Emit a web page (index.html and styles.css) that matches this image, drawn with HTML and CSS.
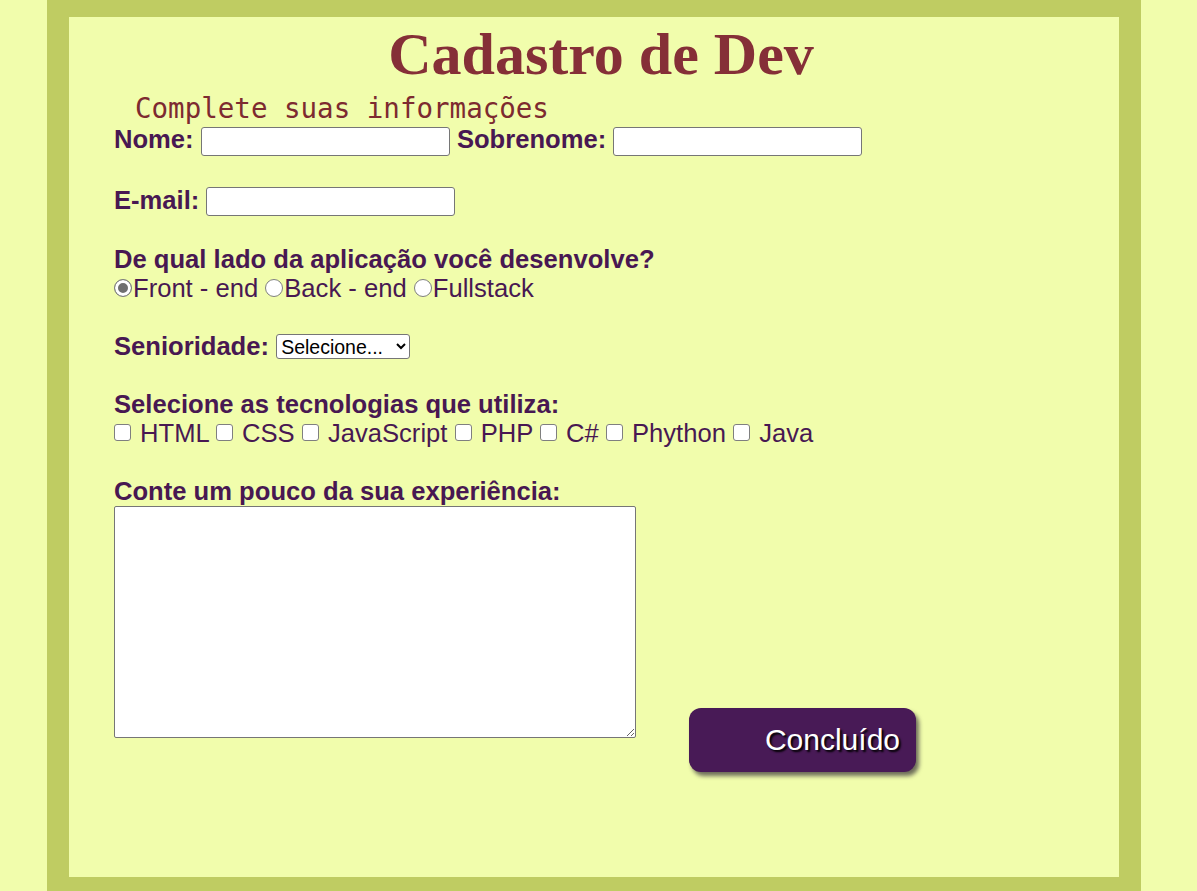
FILE: index.html
```html
<!DOCTYPE html>
<html lang="pt-BR">
<head>
<meta charset="utf-8">
<title>Cadastro de Dev</title>
<link rel="stylesheet" href="styles.css">
</head>
<body>
<main class="page">
  <h1 class="title">Cadastro de Dev</h1>
  <p class="subtitle">Complete suas informações</p>
  <form class="form">
    <div class="row row-names">
      <label class="lbl" for="nome">Nome:</label> <input class="text" id="nome" type="text"> <label class="lbl" for="sobrenome">Sobrenome:</label> <input class="text" id="sobrenome" type="text">
    </div>
    <div class="row row-email">
      <label class="lbl" for="email">E-mail:</label> <input class="text" id="email" type="email">
    </div>
    <div class="row row-side">
      <div class="lbl">De qual lado da aplicação você desenvolve?</div>
      <div class="line"><input class="radio" type="radio" name="lado" checked>Front - end <input class="radio" type="radio" name="lado">Back - end <input class="radio" type="radio" name="lado">Fullstack</div>
    </div>
    <div class="row row-senior">
      <label class="lbl" for="senioridade">Senioridade:</label> <select class="select" id="senioridade"><option>Selecione...</option><option>Júnior</option><option>Pleno</option><option>Sênior</option></select>
    </div>
    <div class="row row-tech">
      <div class="lbl">Selecione as tecnologias que utiliza:</div>
      <div class="line"><input class="check" type="checkbox"> HTML <input class="check" type="checkbox"> CSS <input class="check" type="checkbox"> JavaScript <input class="check" type="checkbox"> PHP <input class="check" type="checkbox"> C# <input class="check" type="checkbox"> Phython <input class="check" type="checkbox"> Java</div>
    </div>
    <div class="row row-exp">
      <div class="lbl">Conte um pouco da sua experiência:</div>
      <div class="exp-line">
        <textarea class="area"></textarea>
        <button class="submit" type="submit">Concluído</button>
      </div>
    </div>
  </form>
</main>
</body>
</html>
```

FILE: styles.css
```css
html, body {
  margin: 0;
  padding: 0;
}

body {
  background: #f1fdac;
  font-family: "Liberation Sans", Arial, sans-serif;
}

.page {
  box-sizing: border-box;
  height: 891px;
  margin: 0 56px 0 47px;
  border-style: solid;
  border-color: #bfcc62;
  border-width: 17px 22px 14px 22px;
  background: #f1fdac;
  padding: 0 31px 0 45px;
  overflow: hidden;
}

.title {
  margin: 3px 0 0;
  font-family: "Liberation Serif", "Times New Roman", serif;
  font-weight: bold;
  font-size: 60px;
  line-height: 69px;
  color: #852f37;
  text-align: center;
}

.subtitle {
  margin: 3px 0 0;
  padding-left: 21px;
  font-family: "DejaVu Sans Mono", monospace;
  font-size: 27.5px;
  line-height: 32px;
  color: #7d2a30;
}

.form {
  margin: 0;
  font-size: 25.6px;
  line-height: 29px;
  color: #481852;
}

.lbl {
  font-weight: bold;
}

.row-names { margin-top: 1px; }
.row-email { margin-top: 30px; }
.row-side { margin-top: 29px; }
.row-senior { margin-top: 29px; }
.row-tech { margin-top: 27px; }
.row-exp { margin-top: 29px; }

.text {
  box-sizing: border-box;
  width: 249px;
  height: 29px;
  margin: 0;
  padding: 1px 4px;
  border: 1px solid #767676;
  border-radius: 3px;
  background: #fff;
  font-family: "Liberation Sans", Arial, sans-serif;
  font-size: 16px;
  vertical-align: middle;
}

.radio {
  -webkit-appearance: none;
  appearance: none;
  box-sizing: border-box;
  width: 18px;
  height: 18px;
  margin: 0 1px 0 0;
  border: 1.5px solid #7f7f7f;
  border-radius: 50%;
  background: #fff;
  vertical-align: baseline;
}

.radio:checked {
  background: #6f6f6f;
  box-shadow: inset 0 0 0 3px #fff;
}

.check {
  -webkit-appearance: none;
  appearance: none;
  box-sizing: border-box;
  width: 17px;
  height: 17px;
  margin: 0 2px 1px 0;
  border: 1.5px solid #7f7f7f;
  border-radius: 3px;
  background: #fff;
  vertical-align: baseline;
}

.select {
  box-sizing: border-box;
  width: 134px;
  height: 25px;
  margin: 0 0 4px;
  border: 1px solid #767676;
  border-radius: 3px;
  background: #fff;
  color: #000;
  font-family: "Liberation Sans", Arial, sans-serif;
  font-size: 19.5px;
  vertical-align: middle;
}

.exp-line {
  display: flex;
  align-items: flex-start;
}

.area {
  box-sizing: border-box;
  width: 522px;
  height: 232px;
  margin: 0;
  border: 1px solid #767676;
  border-radius: 2px;
  background: #fff;
}

.submit {
  box-sizing: border-box;
  width: 227px;
  height: 64px;
  margin: 202px 0 0 53px;
  padding: 0 16px 0 0;
  border: none;
  border-radius: 12px;
  background: #481a56;
  color: #fff;
  font-family: "Liberation Sans", Arial, sans-serif;
  font-size: 30px;
  text-align: right;
  text-shadow: 2px 2px 2px #000;
  box-shadow: 3px 4px 4px #6d6d5a;
}
```
